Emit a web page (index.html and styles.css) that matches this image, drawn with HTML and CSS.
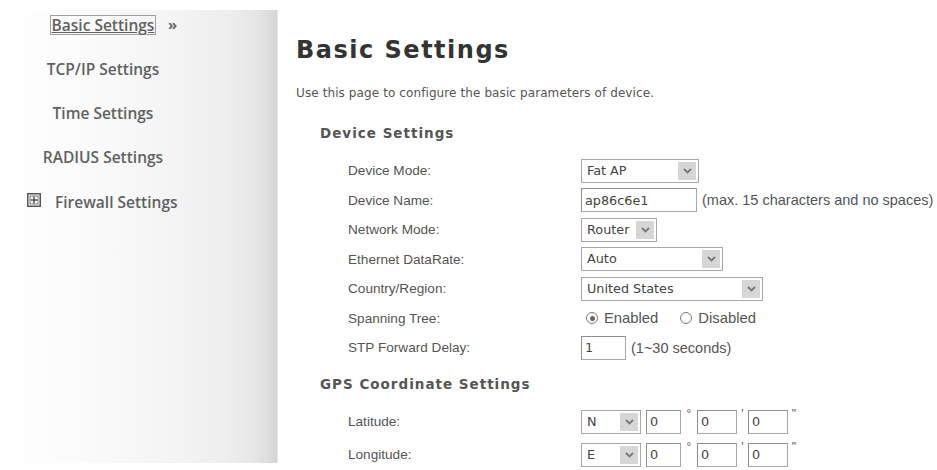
FILE: index.html
```html
<!DOCTYPE html>
<html>
<head>
<meta charset="utf-8">
<link rel="stylesheet" href="styles.css">
</head>
<body>
<div class="page">
  <aside class="sidebar">
    <ul class="nav">
      <li class="nav-item"><a class="nav-link current">Basic Settings</a><span class="raquo">&raquo;</span></li>
      <li class="nav-item"><a class="nav-link">TCP/IP Settings</a></li>
      <li class="nav-item"><a class="nav-link">Time Settings</a></li>
      <li class="nav-item"><a class="nav-link">RADIUS Settings</a></li>
      <li class="nav-item group"><span class="plus"><svg width="14" height="14" viewBox="0 0 14 14"><rect x="0.75" y="0.75" width="12.5" height="12.5" fill="#fff" stroke="#555" stroke-width="1.5"/><rect x="3" y="3" width="8" height="8" fill="#fff" stroke="#777" stroke-width="1"/><path d="M7 3.5v7M3.5 7h7" stroke="#555" stroke-width="1.6"/></svg></span><a class="nav-link">Firewall Settings</a></li>
    </ul>
  </aside>
  <main class="main">
    <h1 class="title">Basic Settings</h1>
    <p class="desc">Use this page to configure the basic parameters of device.</p>
    <h2 class="section">Device Settings</h2>
    <div class="form">
      <div class="label">Device Mode:</div>
      <div class="field"><div class="sel w-fat"><span class="sel-text">Fat AP</span><span class="sel-btn"><svg width="9" height="6" viewBox="0 0 9 6"><path d="M1 1l3.5 3.5L8 1" fill="none" stroke="#777" stroke-width="1.8"/></svg></span></div></div>

      <div class="label">Device Name:</div>
      <div class="field"><input class="txt w-name" type="text" value="ap86c6e1"><span class="hint">(max. 15 characters and no spaces)</span></div>

      <div class="label">Network Mode:</div>
      <div class="field"><div class="sel w-router"><span class="sel-text">Router</span><span class="sel-btn"><svg width="9" height="6" viewBox="0 0 9 6"><path d="M1 1l3.5 3.5L8 1" fill="none" stroke="#777" stroke-width="1.8"/></svg></span></div></div>

      <div class="label">Ethernet DataRate:</div>
      <div class="field"><div class="sel w-auto"><span class="sel-text">Auto</span><span class="sel-btn"><svg width="9" height="6" viewBox="0 0 9 6"><path d="M1 1l3.5 3.5L8 1" fill="none" stroke="#777" stroke-width="1.8"/></svg></span></div></div>

      <div class="label">Country/Region:</div>
      <div class="field"><div class="sel w-us"><span class="sel-text">United States</span><span class="sel-btn"><svg width="9" height="6" viewBox="0 0 9 6"><path d="M1 1l3.5 3.5L8 1" fill="none" stroke="#777" stroke-width="1.8"/></svg></span></div></div>

      <div class="label">Spanning Tree:</div>
      <div class="field"><span class="radio checked"></span><span class="radio-label">Enabled</span><span class="radio off"></span><span class="radio-label">Disabled</span></div>

      <div class="label">STP Forward Delay:</div>
      <div class="field"><input class="txt w-stp" type="text" value="1"><span class="hint">(1~30 seconds)</span></div>
    </div>

    <h2 class="section gps">GPS Coordinate Settings</h2>
    <div class="form coords">
      <div class="label">Latitude:</div>
      <div class="field"><div class="sel w-dir"><span class="sel-text">N</span><span class="sel-btn"><svg width="9" height="6" viewBox="0 0 9 6"><path d="M1 1l3.5 3.5L8 1" fill="none" stroke="#777" stroke-width="1.8"/></svg></span></div><input class="txt w-deg" type="text" value="0"><span class="unit u-deg">&deg;</span><input class="txt w-min" type="text" value="0"><span class="unit u-min">'</span><input class="txt w-sec" type="text" value="0"><span class="unit u-sec">"</span></div>

      <div class="label">Longitude:</div>
      <div class="field"><div class="sel w-dir"><span class="sel-text">E</span><span class="sel-btn"><svg width="9" height="6" viewBox="0 0 9 6"><path d="M1 1l3.5 3.5L8 1" fill="none" stroke="#777" stroke-width="1.8"/></svg></span></div><input class="txt w-deg" type="text" value="0"><span class="unit u-deg">&deg;</span><input class="txt w-min" type="text" value="0"><span class="unit u-min">'</span><input class="txt w-sec" type="text" value="0"><span class="unit u-sec">"</span></div>
    </div>
  </main>
</div>
</body>
</html>
```

FILE: styles.css
```css
html, body {
  margin: 0;
  padding: 0;
  background: #fff;
}
body {
  width: 937px;
  height: 470px;
  overflow: hidden;
  font-family: "Liberation Sans", Arial, sans-serif;
  color: #555;
}
.page {
  display: flex;
  height: 470px;
}
.sidebar {
  width: 278px;
  flex: 0 0 278px;
  height: 470px;
  background:
    linear-gradient(#fff, #fff) top left / 100% 10px no-repeat,
    linear-gradient(#fff, #fff) bottom left / 100% 7px no-repeat,
    linear-gradient(to right, #ffffff 0%, #fbfbfb 30%, #f4f4f4 62%, #eeeeee 82%, #e6e6e6 92%, #dadada 98%, #d4d4d4 99.3%, #ececec 100%);
}
.nav {
  list-style: none;
  margin: 0;
  padding: 3px 0 0 0;
  width: 206px;
}
.nav-item {
  height: 44px;
  display: flex;
  align-items: center;
  justify-content: center;
  position: relative;
  font-family: "Open Sans", "DejaVu Sans", sans-serif;
  font-weight: 600;
  font-size: 15.5px;
  color: #616161;
}
.nav-link {
  color: #616161;
  line-height: 18px;
}
.nav-link.current {
  border: 1px solid #a0a0a0;
  padding: 0 1px;
  text-decoration: underline;
}
.raquo {
  position: absolute;
  left: 168px;
  top: 11px;
  font-size: 15px;
  font-weight: 700;
  color: #666;
}
.nav-item.group {
  justify-content: flex-start;
  padding-left: 27px;
  height: 46px;
}
.plus {
  display: flex;
  width: 14px;
  height: 14px;
  margin-right: 14px;
  margin-top: -4px;
}
.main {
  flex: 1;
  padding-left: 18px;
}
.title {
  margin: 35px 0 0 0;
  font-family: "DejaVu Sans", Verdana, sans-serif;
  font-size: 24px;
  line-height: 30px;
  letter-spacing: 1.5px;
  font-weight: 700;
  color: #333;
}
.desc {
  margin: 21px 0 0 0;
  font-family: "DejaVu Sans", Verdana, sans-serif;
  font-size: 12px;
  line-height: 15px;
  letter-spacing: 0.1px;
  color: #555;
}
.section {
  margin: 23px 0 0 24px;
  font-family: "DejaVu Sans", Verdana, sans-serif;
  font-size: 13.5px;
  line-height: 18px;
  letter-spacing: 1px;
  font-weight: 700;
  color: #555;
}
.section.gps {
  margin-top: 12.5px;
}
.form {
  margin: 14px 0 0 52px;
  display: grid;
  grid-template-columns: 233px auto;
  grid-auto-rows: 29.5px;
  align-items: center;
}
.form.coords {
  margin-top: 12px;
  grid-auto-rows: 33px;
}
.label {
  font-size: 13.6px;
  color: #555;
}
.field {
  display: flex;
  align-items: center;
  height: 100%;
}
.sel {
  box-sizing: border-box;
  height: 24px;
  border: 1px solid #a8a8a8;
  display: flex;
  align-items: stretch;
  padding: 2px;
  background: #fff;
}
.sel-text {
  flex: 1;
  font-family: "DejaVu Sans", Tahoma, sans-serif;
  font-size: 12.8px;
  color: #444;
  line-height: 18px;
  padding-left: 3px;
}
.sel-btn {
  width: 18px;
  background: #d6d6d6;
  display: flex;
  align-items: center;
  justify-content: center;
}
.txt {
  box-sizing: border-box;
  height: 24px;
  margin: 0;
  border: 1px solid #a8a8a8;
  border-top-color: #8e8e8e;
  border-left-color: #8e8e8e;
  padding: 0 0 0 3px;
  font-family: "DejaVu Sans", Tahoma, sans-serif;
  font-size: 12.8px;
  color: #444;
  background: #fff;
  outline: none;
}
.w-fat { width: 118px; }
.w-name { width: 116px; }
.w-router { width: 76px; }
.w-auto { width: 142px; }
.w-us { width: 182px; }
.w-stp { width: 45px; }
.w-dir { width: 60px; margin-right: 5px; }
.w-deg { width: 35px; }
.w-min { width: 40px; }
.w-sec { width: 40px; }
.hint {
  margin-left: 5px;
  font-size: 14.5px;
  color: #555;
}
.unit {
  align-self: flex-start;
  margin-top: 3px;
  font-size: 12px;
  text-align: center;
  color: #555;
  line-height: 12px;
}
.u-deg { width: 16px; }
.u-min { width: 11px; }
.u-sec { width: 12px; }
.radio {
  box-sizing: border-box;
  width: 12px;
  height: 12px;
  border-radius: 50%;
  border: 1px solid #7a7a7a;
  background: #fff;
  position: relative;
  margin-left: 5px;
}
.radio.checked::after {
  content: "";
  position: absolute;
  left: 2.5px;
  top: 2.5px;
  width: 5px;
  height: 5px;
  border-radius: 50%;
  background: #666;
}
.radio.off {
  margin-left: 22px;
}
.radio-label {
  margin-left: 6px;
  font-size: 14.8px;
  color: #555;
}
```
